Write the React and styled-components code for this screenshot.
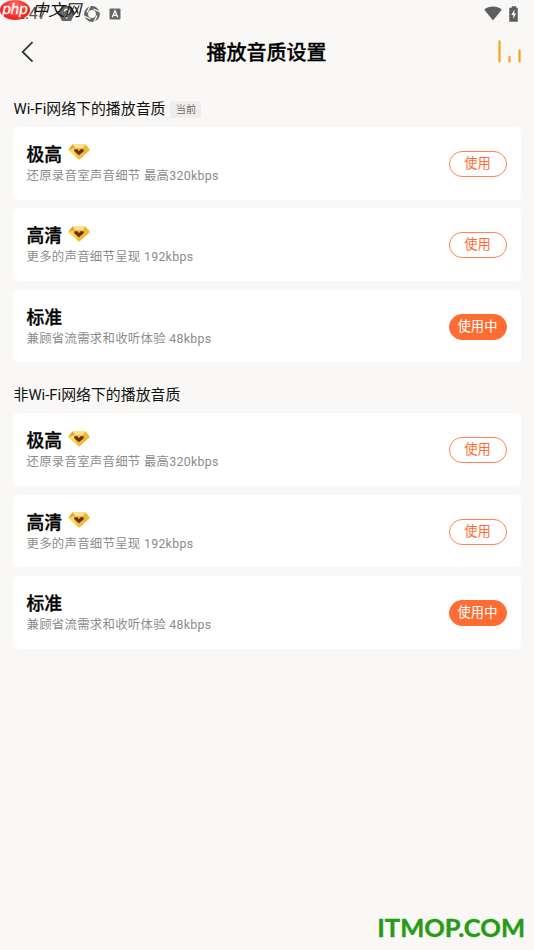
import React from "react";
import styled, { createGlobalStyle } from "styled-components";

const GlobalStyle = createGlobalStyle`
  * { box-sizing: border-box; }
  body { margin: 0; background: #f9f8f6; }
`;

const Screen = styled.div`
  width: 534px;
  height: 950px;
  overflow: hidden;
  display: flex;
  flex-direction: column;
  background: #f9f8f6;
  color: #000;
  font-family: Roboto, "Noto Sans CJK SC", sans-serif;
`;

const StatusBar = styled.div`
  position: relative;
  height: 27px;
  flex: none;
  display: flex;
  align-items: center;
  justify-content: space-between;
  padding: 0 15px 0 16px;
`;

const StatusGroup = styled.div`
  display: flex;
  align-items: center;
  gap: ${(p) => p.$gap}px;
`;

const Clock = styled.span`
  width: 33px;
  font-size: 16px;
  line-height: 20px;
  color: #555;
`;

const SiteMark = styled.div`
  position: absolute;
  left: 0;
  top: 0;
  display: flex;
  align-items: center;
  height: 20px;
`;

const PhpBadge = styled.span`
  width: 30px;
  height: 20px;
  border-radius: 50%;
  background: radial-gradient(ellipse at 50% 25%, #ff6a60 0%, #f52a25 60%, #e51c1c 100%);
  color: #fff;
  font: italic 15px/17px "Liberation Sans", sans-serif;
  -webkit-text-stroke: 0.3px #fff;
  text-align: center;
`;

const SiteName = styled.span`
  margin-left: 2px;
  font: italic 400 16.5px/18px "Noto Sans CJK SC", sans-serif;
  letter-spacing: -0.2px;
  padding-bottom: 2px;
  color: #111;
`;

const Header = styled.header`
  height: 50px;
  flex: none;
  display: grid;
  grid-template-columns: 40px 1fr 40px;
  align-items: center;
  padding: 0 12px 0 13px;
`;

const Title = styled.h1`
  margin: 0;
  padding: 1px 2px 0 0;
  font-size: 20px;
  line-height: 30px;
  font-weight: 500;
  text-align: center;
  -webkit-text-stroke: 0.3px #000;
`;

const BackIcon = styled.svg`
  display: block;
  margin-left: 7px;
`;

const PlayingIcon = styled.svg`
  display: block;
  justify-self: end;
`;

const Section = styled.section`
  padding: 0 13px;
  margin-top: ${(p) => p.$top}px;
`;

const SectionHead = styled.h2`
  display: flex;
  align-items: center;
  gap: 5px;
  margin: 0;
  height: 30px;
  padding-left: 0.5px;
  font-size: 14.9px;
  line-height: 22px;
  font-weight: 400;
  color: #111;
`;

const Tag = styled.span`
  width: 31px;
  height: 17px;
  border-radius: 2px;
  background: #efeeec;
  color: #333;
  font-size: 10.2px;
  font-weight: 300;
  line-height: 18px;
  text-align: center;
`;

const CardList = styled.div`
  display: flex;
  flex-direction: column;
  gap: 8.6px;
  margin-top: 3px;
`;

const Card = styled.article`
  height: 72.7px;
  display: flex;
  align-items: center;
  justify-content: space-between;
  padding: 1.2px 14px 0 13.5px;
  border-radius: 5px;
  background: #fff;
`;

const Info = styled.div`
  display: flex;
  flex-direction: column;
`;

const Name = styled.div`
  display: flex;
  align-items: center;
  gap: 6px;
  height: 24px;
  font-size: 17.8px;
  line-height: 24px;
  font-weight: 500;
  -webkit-text-stroke: 0.35px #000;
`;

const Desc = styled.div`
  height: 18px;
  font-size: 12.4px;
  line-height: 18px;
  letter-spacing: 0.28px;
  color: #8c8c8c;
`;

const UseButton = styled.button`
  width: 58px;
  height: 26px;
  padding: 0 1px 0 0;
  border: 1px solid ${(p) => (p.$active ? "#ff6c33" : "#ff8458")};
  border-radius: 13px;
  background: ${(p) => (p.$active ? "#ff6c33" : "#fff")};
  color: ${(p) => (p.$active ? "#fff" : "#ff6c33")};
  font: 400 13.3px/24px Roboto, "Noto Sans CJK SC", sans-serif;
`;

const GemSvg = styled.svg`
  display: block;
  margin-top: -5px;
`;

const Footer = styled.footer`
  margin-top: auto;
  padding: 0 9px 6px 0;
  text-align: right;
  font: 700 25.5px/34px Lato, "Noto Sans", sans-serif;
  -webkit-text-stroke: 0.4px #299a16;
  color: #299a16;
`;

const Gem = () => (
  <GemSvg width="22" height="16" viewBox="0 0 22 16">
    <path d="M4.500 .5h13L21.700 6 11 15.800.3 6z" fill="#f2bd3e" />
    <path d="M4.500 .5h13L15 4H7z" fill="#ffe08a" />
    <path d="M4.500 .5 7 4 .3 6z" fill="#d9a33b" />
    <path d="M17.500 .5 21.700 6 15 4z" fill="#eeb72f" />
    <path d="M.3 6 7 4l-.5 5L11 15.800z" fill="#ffd759" />
    <path d="M21.700 6 15 4l1 5-5 6.800z" fill="#f3b92e" />
    <path d="M6.300 5.300h3.200L11 7.200l1.500-1.900h3.200v2L11 11.200 6.300 7.300z" fill="#63300c" />
  </GemSvg>
);

const QUALITIES = [
  { name: "极高", desc: "还原录音室声音细节 最高320kbps", gem: true },
  { name: "高清", desc: "更多的声音细节呈现 192kbps", gem: true },
  { name: "标准", desc: "兼顾省流需求和收听体验 48kbps", active: true },
];

const QualitySection = ({ title, tag, top }) => (
  <Section $top={top}>
    <SectionHead>
      {title}
      {tag && <Tag>{tag}</Tag>}
    </SectionHead>
    <CardList>
      {QUALITIES.map((q) => (
        <Card key={q.name}>
          <Info>
            <Name>
              {q.name}
              {q.gem && <Gem />}
            </Name>
            <Desc>{q.desc}</Desc>
          </Info>
          <UseButton $active={q.active}>{q.active ? "使用中" : "使用"}</UseButton>
        </Card>
      ))}
    </CardList>
  </Section>
);

export default function App() {
  return (
    <>
      <GlobalStyle />
      <Screen>
        <StatusBar>
          <StatusGroup $gap={9}>
            <Clock>2:47</Clock>
            <svg width="17" height="15" viewBox="0 0 17 15">
              <path d="M4 0h9l4 7-4 8H4L0 7z" fill="#666" />
              <path d="M6.500 5.500c0-3 4.500-3 4.500 0 0 2-2.200 1.800-2.200 4M8.800 11v1.500" fill="none" stroke="#f9f8f6" strokeWidth="1.500" />
            </svg>
            <svg width="16" height="16" viewBox="0 0 16 16">
              <circle cx="8" cy="8" r="5.900" fill="none" stroke="#666" strokeWidth="4" />
              <path d="M6 0 3 6.500M16 6 9.500 3M10 16l3-6.500M0 10l6.500 3" stroke="#f9f8f6" strokeWidth="1.300" />
            </svg>
            <svg width="12" height="12" viewBox="0 0 12 12">
              <rect x=".5" y=".5" width="11" height="11" rx="1" fill="#666" />
              <path d="M3.300 9.300 6 2.700l2.700 6.600M4.300 7.300h3.400" fill="none" stroke="#fff" strokeWidth="1.300" />
            </svg>
          </StatusGroup>
          <StatusGroup $gap={7}>
            <svg width="18" height="15" viewBox="0 0 18 15">
              <path d="M.3 3.700C5-.6 13-.6 17.700 3.700L9 14.500z" fill="#5e5e5e" />
            </svg>
            <svg width="10" height="16" viewBox="0 0 10 16">
              <path d="M3 .5h4V2h1.500v13.500h-8V2H3z" fill="#5e5e5e" stroke="#5e5e5e" strokeWidth=".5" />
              <path d="M5.600 3.500 2.300 9h2v4L7 7.500H5.200z" fill="#fff" />
            </svg>
          </StatusGroup>
          <SiteMark>
            <PhpBadge>php</PhpBadge>
            <SiteName>中文网</SiteName>
          </SiteMark>
        </StatusBar>
        <Header>
          <BackIcon width="16" height="22" viewBox="0 0 16 22">
            <path d="M12.500 1.200 2.700 10.900l9.800 9.800" fill="none" stroke="#333" strokeWidth="1.800" />
          </BackIcon>
          <Title>播放音质设置</Title>
          <PlayingIcon width="26" height="24" viewBox="0 0 26 24">
            <path d="M3.500 1.500v20M13.500 17v4.500M23.500 10.500v11" stroke="#f5a623" strokeWidth="2.300" strokeLinecap="round" />
          </PlayingIcon>
        </Header>
        <QualitySection title="Wi-Fi网络下的播放音质" tag="当前" top={17} />
        <QualitySection title="非Wi-Fi网络下的播放音质" top={18.200} />
        <Footer>ITMOP.COM</Footer>
      </Screen>
    </>
  );
}
